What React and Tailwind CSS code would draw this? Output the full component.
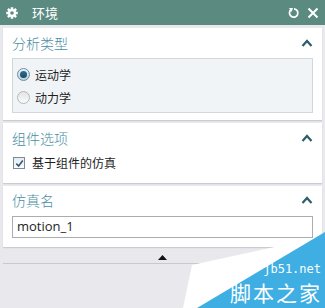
import React from "react";

const cjk = { fontFamily: '"Microsoft YaHei", "Noto Sans CJK SC", "Noto Sans", sans-serif' };

const Chevron = () => (
  <svg width="12" height="8" viewBox="0 0 12 8" className="mr-[2px]">
    <path d="M1.5 7 L6 2 L10.5 7" fill="none" stroke="#2f5d6b" strokeWidth="2.2" />
  </svg>
);

const SectionHeader = ({ title }) => (
  <div className="flex items-center justify-between h-[28px] pl-[9px] pr-[7px]">
    <span className="text-[14px] font-light text-[#4a8ea4]" style={cjk}>
      {title}
    </span>
    <Chevron />
  </div>
);

const Radio = ({ checked, label }) => (
  <div className="flex items-center gap-[5px] h-[23px]">
    {checked ? (
      <span className="w-[13px] h-[13px] rounded-full border border-[#6e8fa0] bg-gradient-to-b from-[#e9f2f7] to-[#b8cfdc] flex items-center justify-center">
        <span className="w-[7px] h-[7px] rounded-full bg-gradient-to-b from-[#2f6f8f] to-[#1b4a66]"></span>
      </span>
    ) : (
      <span className="w-[13px] h-[13px] rounded-full border border-[#b4b8bc] bg-gradient-to-b from-[#e2e4e6] to-[#fafafa]"></span>
    )}
    <span className="text-[12px] text-[#1e1e1e]" style={cjk}>
      {label}
    </span>
  </div>
);

export default function App() {
  return (
    <div className="w-[325px] h-[308px] bg-[#e9e8ec] relative overflow-hidden">
      {/* title bar */}
      <div className="h-[25px] bg-[#5b8a81] flex items-center pl-[6px] pr-[6px]">
        <svg width="12" height="12" viewBox="0 0 24 24">
          <g fill="#ffffff">
            <circle cx="12" cy="12" r="8" />
            {[0, 45, 90, 135, 180, 225, 270, 315].map((a) => (
              <rect key={a} x="9.5" y="0.5" width="5" height="6" transform={`rotate(${a} 12 12)`} />
            ))}
          </g>
          <circle cx="12" cy="12" r="3.6" fill="#5b8a81" />
        </svg>
        <span className="ml-[14px] text-[13px] text-white" style={cjk}>
          环境
        </span>
        <div className="ml-auto flex items-center gap-[7px]">
          <svg width="12" height="12" viewBox="0 0 12 12">
            <path d="M3.2 2.6 A4.2 4.2 0 1 0 6 1.8" fill="none" stroke="#ffffff" strokeWidth="1.8" />
            <path d="M1 1 L5 1 L3.6 5 Z" fill="#ffffff" />
          </svg>
          <svg width="12" height="12" viewBox="0 0 12 12">
            <path d="M1.5 1.5 L10.5 10.5 M10.5 1.5 L1.5 10.5" stroke="#ffffff" strokeWidth="2" />
          </svg>
        </div>
      </div>

      <div className="px-[3px] pt-[3px] flex flex-col gap-[3px]">
        {/* 分析类型 */}
        <div className="bg-white shadow-[0_1px_1px_rgba(0,0,0,0.12)] h-[92px] pt-[1px]">
          <SectionHeader title="分析类型" />
          <div className="mx-[9px] mt-[1px] h-[55px] bg-[#f1f4f6] border border-[#d3d7da] pl-[4px] pt-[4px] flex flex-col">
            <Radio checked label="运动学" />
            <Radio label="动力学" />
          </div>
        </div>

        {/* 组件选项 */}
        <div className="bg-white shadow-[0_1px_1px_rgba(0,0,0,0.12)] h-[60px] pt-[1px]">
          <SectionHeader title="组件选项" />
          <div className="flex items-center gap-[7px] pl-[10px] mt-[2px]">
            <span className="w-[12px] h-[12px] border border-[#7d8b95] bg-gradient-to-b from-[#e6ebef] to-[#fbfcfd] flex items-center justify-center">
              <svg width="9" height="9" viewBox="0 0 9 9">
                <path d="M1.3 4.6 L3.6 7 L7.8 1.4" fill="none" stroke="#34597a" strokeWidth="1.6" />
              </svg>
            </span>
            <span className="text-[12px] text-[#1e1e1e]" style={cjk}>
              基于组件的仿真
            </span>
          </div>
        </div>

        {/* 仿真名 */}
        <div className="bg-white shadow-[0_1px_1px_rgba(0,0,0,0.12)] h-[61px]">
          <SectionHeader title="仿真名" />
          <div className="mx-[9px] mt-[2px] h-[22px] border border-[#a9adb1] flex items-center pl-[4px]">
            <span className="text-[13px] text-[#1e1e1e]" style={{ fontFamily: '"Segoe UI", "Open Sans", sans-serif' }}>
              motion_1
            </span>
          </div>
        </div>
      </div>

      {/* collapse arrow + divider */}
      <div className="flex justify-center mt-[8px]">
        <svg width="9" height="5" viewBox="0 0 9 5">
          <path d="M0 5 L4.5 0 L9 5 Z" fill="#111111" />
        </svg>
      </div>
      <div className="mx-[3px] mt-[3px] h-px bg-[#c9c9cc]"></div>

      {/* watermark */}
      <svg className="absolute left-0 top-0" width="325" height="308" viewBox="0 0 325 308">
        <polygon points="183,308 192,265 325,236 325,240 197,308" fill="#ffffff" />
        <polygon points="197,308 325,232 325,308" fill="#3eaee3" />
      </svg>
      <div className="absolute right-[4px] top-[263px] text-[12px] leading-[12px] text-white" style={{ fontFamily: '"DejaVu Sans Mono", monospace' }}>
        jb51.net
      </div>
      <div className="absolute right-[3px] top-[282px] text-[21px] leading-[21px] text-white tracking-[2px]" style={cjk}>
        脚本之家
      </div>
    </div>
  );
}
